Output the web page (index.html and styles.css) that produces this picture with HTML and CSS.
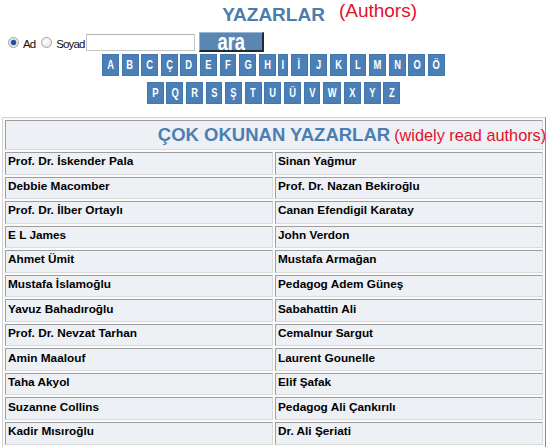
FILE: index.html
```html
<!DOCTYPE html>
<html lang="tr">
<head>
<meta charset="utf-8">
<title>Yazarlar</title>
<link rel="stylesheet" href="styles.css">
</head>
<body>
<div class="page">
  <h1 class="title"><span class="title-text">YAZARLAR<span class="note note-title">(Authors)</span></span></h1>

  <form class="search">
    <label class="opt"><input type="radio" name="tip" class="radio" checked><span class="opt-text">Ad</span></label>
    <label class="opt opt-last"><input type="radio" name="tip" class="radio"><span class="opt-text">Soyad</span></label>
    <input type="text" class="field">
    <button type="button" class="go"><span class="go-text">ara</span></button>
  </form>

  <nav class="keys">
    <div class="key-row">
      <a class="key"><span>A</span></a><a class="key"><span>B</span></a><a class="key"><span>C</span></a><a class="key"><span>Ç</span></a><a class="key"><span>D</span></a><a class="key"><span>E</span></a><a class="key"><span>F</span></a><a class="key"><span>G</span></a><a class="key"><span>H</span></a><a class="key narrow"><span>I</span></a><a class="key"><span>İ</span></a><a class="key"><span>J</span></a><a class="key"><span>K</span></a><a class="key"><span>L</span></a><a class="key"><span>M</span></a><a class="key"><span>N</span></a><a class="key"><span>O</span></a><a class="key"><span>Ö</span></a>
    </div>
    <div class="key-row">
      <a class="key"><span>P</span></a><a class="key"><span>Q</span></a><a class="key"><span>R</span></a><a class="key"><span>S</span></a><a class="key"><span>Ş</span></a><a class="key"><span>T</span></a><a class="key"><span>U</span></a><a class="key"><span>Ü</span></a><a class="key"><span>V</span></a><a class="key"><span>W</span></a><a class="key"><span>X</span></a><a class="key"><span>Y</span></a><a class="key"><span>Z</span></a>
    </div>
  </nav>

  <div class="list">
    <div class="list-head"><span class="head-text">ÇOK OKUNAN YAZARLAR<span class="note note-head">(widely read authors)</span></span></div>
    <div class="cell">Prof. Dr. İskender Pala</div><div class="cell">Sinan Yağmur</div>
    <div class="cell">Debbie Macomber</div><div class="cell">Prof. Dr. Nazan Bekiroğlu</div>
    <div class="cell">Prof. Dr. İlber Ortaylı</div><div class="cell">Canan Efendigil Karatay</div>
    <div class="cell">E L James</div><div class="cell">John Verdon</div>
    <div class="cell">Ahmet Ümit</div><div class="cell">Mustafa Armağan</div>
    <div class="cell">Mustafa İslamoğlu</div><div class="cell">Pedagog Adem Güneş</div>
    <div class="cell">Yavuz Bahadıroğlu</div><div class="cell">Sabahattin Ali</div>
    <div class="cell">Prof. Dr. Nevzat Tarhan</div><div class="cell">Cemalnur Sargut</div>
    <div class="cell">Amin Maalouf</div><div class="cell">Laurent Gounelle</div>
    <div class="cell">Taha Akyol</div><div class="cell">Elif Şafak</div>
    <div class="cell">Suzanne Collins</div><div class="cell">Pedagog Ali Çankırılı</div>
    <div class="cell">Kadir Mısıroğlu</div><div class="cell">Dr. Ali Şeriati</div>
    <div class="cell"></div><div class="cell"></div>
  </div>
</div>
</body>
</html>
```

FILE: styles.css
```css
html, body {
  margin: 0;
  padding: 0;
  background: #ffffff;
}

body {
  font-family: "Liberation Sans", Arial, sans-serif;
  color: #000;
}

.page {
  width: 551px;
  overflow: hidden;
}

/* ---------- title ---------- */
.title {
  margin: 3px 4px 0 0;
  height: 24px;
  line-height: 24px;
  font-size: 19px;
  font-weight: bold;
  color: #4b7cad;
  text-align: center;
}

.title-text,
.head-text {
  position: relative;
}

.note {
  position: absolute;
  left: 100%;
  font-weight: normal;
  line-height: normal;
  color: #e3102c;
  white-space: nowrap;
}

.note-title {
  margin-left: 14px;
  top: -4px;
  font-size: 19px;
}

.note-head {
  margin-left: 4px;
  top: 1.5px;
  font-size: 16.3px;
}

/* ---------- search ---------- */
.search {
  display: flex;
  align-items: center;
  height: 20px;
  margin: 5px 0 0 0;
  padding-left: 8px;
}

.opt {
  display: flex;
  align-items: center;
  align-self: stretch;
  gap: 4px;
  margin-right: 6px;
}

.opt-last {
  margin-right: 2px;
}

.radio {
  appearance: none;
  -webkit-appearance: none;
  box-sizing: border-box;
  width: 11px;
  height: 11px;
  margin: 0;
  border: 1px solid #a3a3a3;
  border-radius: 50%;
  background: radial-gradient(circle at 40% 35%, #ffffff 0, #dedede 100%);
}

.radio:checked {
  background: radial-gradient(circle at 50% 50%, #1d4c86 0, #2b5f98 2.4px, #dfe3e8 3.2px, #f4f4f4 100%);
}

.opt-text {
  align-self: flex-end;
  margin-bottom: 1px;
  font-size: 11.5px;
  line-height: 13px;
  letter-spacing: -0.9px;
  color: #111;
}

.field {
  box-sizing: border-box;
  width: 109px;
  height: 17px;
  margin: 0 4px 0 0;
  padding: 0 2px;
  border: 1px solid #c6c6c6;
  border-top-color: #b5b5b5;
  background: #fff;
}

.go {
  box-sizing: border-box;
  width: 65px;
  height: 20px;
  margin: 0;
  padding: 0;
  border-style: solid;
  border-width: 1px 2px 2px 1px;
  border-color: #9ab6d3 #1e2a38 #1e2a38 #9ab6d3;
  background: #5a86b4;
  color: #fff;
  font-family: "Liberation Sans", Arial, sans-serif;
  font-weight: bold;
  font-size: 23px;
  line-height: 16px;
  text-align: center;
}

.go-text {
  display: inline-block;
  transform: scaleX(0.8);
}

/* ---------- letter keys ---------- */
.keys {
  display: flex;
  flex-direction: column;
  align-items: center;
  gap: 6px;
  margin-top: 2px;
  padding-right: 4px;
}

.key-row {
  display: flex;
  gap: 2.8px;
}

.key {
  box-sizing: border-box;
  display: flex;
  justify-content: center;
  min-width: 16.8px;
  height: 22px;
  padding: 0 3px;
  background: #4a7fb8;
  box-shadow: inset 0 0 0 1px #4276ad;
  color: #ffffff;
  font-weight: bold;
  font-size: 13px;
  line-height: 22px;
  text-decoration: none;
}

.key.narrow {
  min-width: 0;
}

.key span {
  display: inline-block;
  transform: scaleX(0.72);
}

/* ---------- author list ---------- */
.list {
  box-sizing: border-box;
  width: 544px;
  margin: 13px 0 0 2px;
  padding: 2px;
  border: 1px solid;
  border-color: #d2d2d2 #8c8c8c #8c8c8c #d2d2d2;
  background: #fbfbfb;
  display: grid;
  grid-template-columns: 1fr 1fr;
  grid-template-rows: 30px;
  grid-auto-rows: 22.55px;
  gap: 2px;
}

.list-head,
.cell {
  box-sizing: border-box;
  border: 1px solid;
  border-color: #9d9d9d #dadada #dadada #9d9d9d;
  background: #edf0f4;
  display: flex;
  align-items: center;
  white-space: nowrap;
  overflow: hidden;
}

.list-head {
  grid-column: 1 / -1;
  justify-content: center;
  overflow: visible;
  font-weight: bold;
  font-size: 18.5px;
  color: #4b7fb3;
}

.cell {
  padding: 0 2px 4px 2px;
  font-weight: bold;
  font-size: 11.8px;
  color: #000;
}
```
